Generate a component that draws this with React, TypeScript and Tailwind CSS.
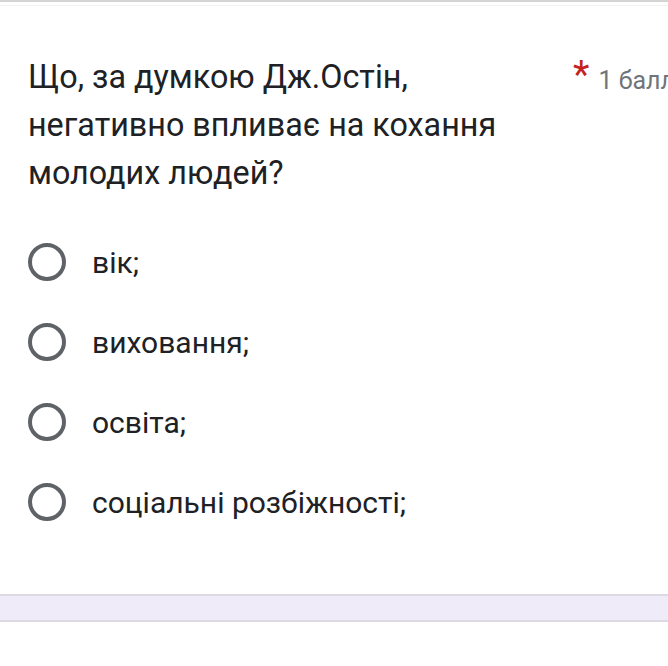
export default function App() {
  const options = ["вік;", "виховання;", "освіта;", "соціальні розбіжності;"];

  return (
    <main
      className="w-[668px] h-[666px] overflow-hidden bg-white flex flex-col"
      style={{ fontFamily: "Roboto, 'Noto Sans', sans-serif" }}
    >
      <div className="h-[2px] bg-[#d4d4d4]" />
      <div className="h-[3px] bg-white" />
      <div className="h-px bg-[#f3f3f3]" />
      <section className="flex-1 flex flex-col pl-[28px]">
        <div className="flex items-start mt-[47px]">
          <h1 className="w-[520px] shrink-0 text-[32.3px] leading-[48px] text-[#202124]">
            Що, за думкою Дж.Остін, негативно впливає на кохання молодих людей?
          </h1>
          <div className="flex items-start ml-[25px] whitespace-nowrap">
            <span className="text-[#c5221f] text-[38px] leading-[48px] -mt-[2px]">*</span>
            <span className="ml-[9px] text-[25px] leading-[48px] mt-[4px] text-[#70757a]">
              1 балл
            </span>
          </div>
        </div>
        <div className="flex flex-col mt-[25px]">
          {options.map((o) => (
            <div key={o} className="flex items-center h-[80px]">
              <span className="w-[38px] h-[38px] rounded-full border-[4px] border-[#5f6368]" />
              <span className="ml-[26px] text-[30px] text-[#202124]">{o}</span>
            </div>
          ))}
        </div>
      </section>
      <div className="h-[2px] bg-[#dcd9e0] mt-auto" />
      <div className="h-[24px] bg-[#efebf8]" />
      <div className="h-[2px] bg-[#dcd9e0]" />
      <div className="h-[44px] bg-white" />
    </main>
  );
}
